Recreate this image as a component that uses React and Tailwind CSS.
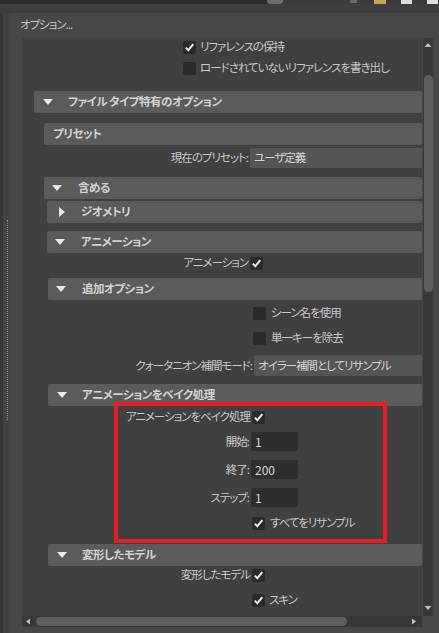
import React from "react";

const Check = ({ checked }) => (
  <div className="w-[13px] h-[13px] bg-[#2a2a2a] rounded-[2px] flex items-center justify-center shrink-0">
    {checked && (
      <svg width="11" height="11" viewBox="0 0 11 11">
        <path d="M1.8 5.6 L4.3 8.2 L9.3 2.2" fill="none" stroke="#e6e6e6" strokeWidth="2" />
      </svg>
    )}
  </div>
);

const Down = () => (
  <svg width="10" height="6" viewBox="0 0 10 6" className="shrink-0">
    <path d="M0 0 H10 L5 6 Z" fill="#e8e8e8" />
  </svg>
);

const Right = () => (
  <svg width="6" height="10" viewBox="0 0 6 10" className="shrink-0">
    <path d="M0 0 L6 5 L0 10 Z" fill="#e8e8e8" />
  </svg>
);

// collapsible frame header
const Bar = ({ ml, title, icon, tri = "pl-[8px]", className = "" }) => (
  <div className={`h-[22px] bg-[#5b5b5b] rounded-[2px] flex items-center ${ml} ${className}`}>
    <div className={`w-[34px] flex items-center ${tri}`}>
      {icon === "down" && <Down />}
      {icon === "right" && <Right />}
    </div>
    <span className="text-[#d2d2d2] font-bold tracking-[-0.5px]">{title}</span>
  </div>
);

const CheckText = ({ ml, checked, label, gap = "gap-[5px]", className = "" }) => (
  <div className={`h-[14px] flex items-center ${gap} ${ml} ${className}`}>
    <Check checked={checked} />
    <span className="leading-none">{label}</span>
  </div>
);

const LabelCheck = ({ w, label, className = "" }) => (
  <div className={`h-[14px] flex items-center ${className}`}>
    <div className={`${w} text-right pr-[2px] leading-none`}>{label}</div>
    <Check checked />
  </div>
);

const NumField = ({ label, value, className = "" }) => (
  <div className={`h-[19px] flex items-center ${className}`}>
    <div className="w-[229px] text-right pr-[2px] leading-none">{label}</div>
    <div className="w-[47px] h-[19px] bg-[#2e2e2e] rounded-[2px] flex items-center pl-[4px] text-[#d6d6d6] text-[12px] tracking-normal">{value}</div>
  </div>
);

export default function App() {
  return (
    <div className="w-[439px] h-[633px] bg-[#474747] overflow-hidden flex flex-col font-['Noto_Sans_CJK_JP',sans-serif] text-[11.5px] tracking-[-1px] text-[#c8c8c8] [font-feature-settings:'palt']">
      {/* top strip */}
      <div className="h-[4px] bg-[#2b2b2b] flex shrink-0">
        <div className="w-[267px]" />
        <div className="w-[16px] h-[4px] bg-[#6c6c6c] rounded-b-[3px]" />
        <div className="flex-1 bg-[#3b3b3b] flex">
          <div className="w-[67px]" />
          <div className="w-[7px] h-[3px] bg-[#6a6a6a]" />
          <div className="w-[17px]" />
          <div className="w-[12px] h-[4px] bg-[#c9a35a]" />
          <div className="w-[15px]" />
          <div className="w-[11px] h-[4px] bg-[#dcdcdc]" />
          <div className="w-[15px]" />
          <div className="w-[11px] h-[4px] bg-[#dcdcdc]" />
        </div>
      </div>
      <div className="h-[9px] bg-[#3e3e3e] shrink-0" />

      <div className="flex flex-1">
        {/* left splitter */}
        <div className="w-[11px] flex shrink-0">
          <div className="w-[3px] bg-[#363636]" />
          <div className="w-[8px] bg-[#434343] flex justify-center pt-[207px]">
            <div className="w-0 h-[200px] border-l border-dotted border-[#8a8a8a]" />
          </div>
        </div>

        <div className="flex-1 flex flex-col">
          <div className="h-[25px] pl-[9px] flex items-center">
            <span className="leading-none -mt-[1px]">オプション...</span>
          </div>

          {/* scroll panel */}
          <div className="flex h-[589px] ml-[11px] w-[412px]">
            <div className="w-[400px] flex flex-col bg-[#404040]">
              <div className="h-[578px] relative overflow-hidden flex flex-col">
                <CheckText ml="ml-[161px]" className="mt-[2px]" gap="gap-[4px]" checked label="リファレンスの保持" />
                <CheckText ml="ml-[161px]" className="mt-[7px]" gap="gap-[4px]" label="ロードされていないリファレンスを書き出し" />

                <Bar ml="ml-[12px]" className="mt-[16px]" icon="down" tri="pl-[9px]" title="ファイル タイプ特有のオプション" />

                <div className="h-[22px] bg-[#5b5b5b] rounded-[2px] ml-[22px] mt-[10px] flex items-center pl-[9px]">
                  <span className="text-[#d2d2d2] font-bold tracking-[-0.5px]">プリセット</span>
                </div>
                <div className="h-[20px] mt-[3px] flex items-center">
                  <div className="w-[228px] text-right pr-[2px] leading-none">現在のプリセット:</div>
                  <div className="flex-1 h-[20px] bg-[#555555] rounded-l-[2px] flex items-center pl-[4px] text-[#d4d4d4]">ユーザ定義</div>
                </div>

                <Bar ml="ml-[22px]" className="mt-[9px]" icon="down" title="含める" />
                <Bar ml="ml-[25px]" className="mt-[2px]" icon="right" tri="pl-[12px]" title="ジオメトリ" />
                <Bar ml="ml-[25px]" className="mt-[8px]" icon="down" title="アニメーション" />
                <LabelCheck w="w-[228px]" className="mt-[3px]" label="アニメーション" />

                <Bar ml="ml-[26px]" className="mt-[8px]" icon="down" title="追加オプション" />
                <CheckText ml="ml-[231px]" className="mt-[6px]" checked={false} label="シーン名を使用" />
                <CheckText ml="ml-[231px]" className="mt-[11px]" checked={false} label="単一キーを除去" />
                <div className="h-[21px] mt-[10px] flex items-center">
                  <div className="w-[232px] text-right pr-[2px] leading-none">クォータニオン補間モード:</div>
                  <div className="flex-1 h-[21px] bg-[#555555] rounded-l-[2px] flex items-center pl-[4px] text-[#d4d4d4]">オイラー補間としてリサンプル</div>
                </div>

                <Bar ml="ml-[26px]" className="mt-[8px]" icon="down" tri="pl-[9px]" title="アニメーションをベイク処理" />
                <LabelCheck w="w-[230px]" className="mt-[4px]" label="アニメーションをベイク処理" />
                <NumField className="mt-[8px]" label="開始:" value="1" />
                <NumField className="mt-[9px]" label="終了:" value="200" />
                <NumField className="mt-[9px]" label="ステップ:" value="1" />
                <CheckText ml="ml-[230px]" className="mt-[9px]" checked label="すべてをリサンプル" />

                <Bar ml="ml-[26px]" className="mt-[14px]" icon="down" tri="pl-[9px]" title="変形したモデル" />
                <LabelCheck w="w-[230px]" className="mt-[2px]" label="変形したモデル" />
                <CheckText ml="ml-[230px]" className="mt-[11px]" gap="gap-[4px]" checked label="スキン" />

                {/* red annotation box */}
                <div className="absolute left-[92px] top-[364px] w-[273px] h-[141px] border-[4px] border-[#e41d26]" />
              </div>
              {/* horizontal scrollbar */}
              <div className="h-[11px] bg-[#383838] flex items-center">
                <svg width="14" height="11" viewBox="0 0 14 11" className="shrink-0">
                  <path d="M4 5.5 L8 2.5 V8.5 Z" fill="#bdbdbd" />
                </svg>
                <div className="w-[311px] h-[9px] bg-[#5e5e5e] rounded-full" />
                <div className="flex-1" />
                <svg width="10" height="11" viewBox="0 0 10 11" className="shrink-0 mr-[3px]">
                  <path d="M3 2.5 L7 5.5 L3 8.5 Z" fill="#bdbdbd" />
                </svg>
              </div>
            </div>
            {/* vertical scrollbar */}
            <div className="w-[12px] flex flex-col">
              <div className="h-[578px] bg-[#383838] ml-[1px] w-[10px] flex flex-col items-center">
                <svg width="10" height="10" viewBox="0 0 10 10" className="mt-[2px] shrink-0">
                  <path d="M1.5 7 L5 3 L8.5 7 Z" fill="#bdbdbd" />
                </svg>
                <div className="w-[9px] h-[217px] bg-[#5e5e5e] rounded-full mt-[25px]" />
                <div className="flex-1" />
                <svg width="10" height="10" viewBox="0 0 10 10" className="mb-[3px] shrink-0">
                  <path d="M1.5 3 L5 7 L8.5 3 Z" fill="#bdbdbd" />
                </svg>
              </div>
            </div>
          </div>
        </div>
      </div>
    </div>
  );
}
